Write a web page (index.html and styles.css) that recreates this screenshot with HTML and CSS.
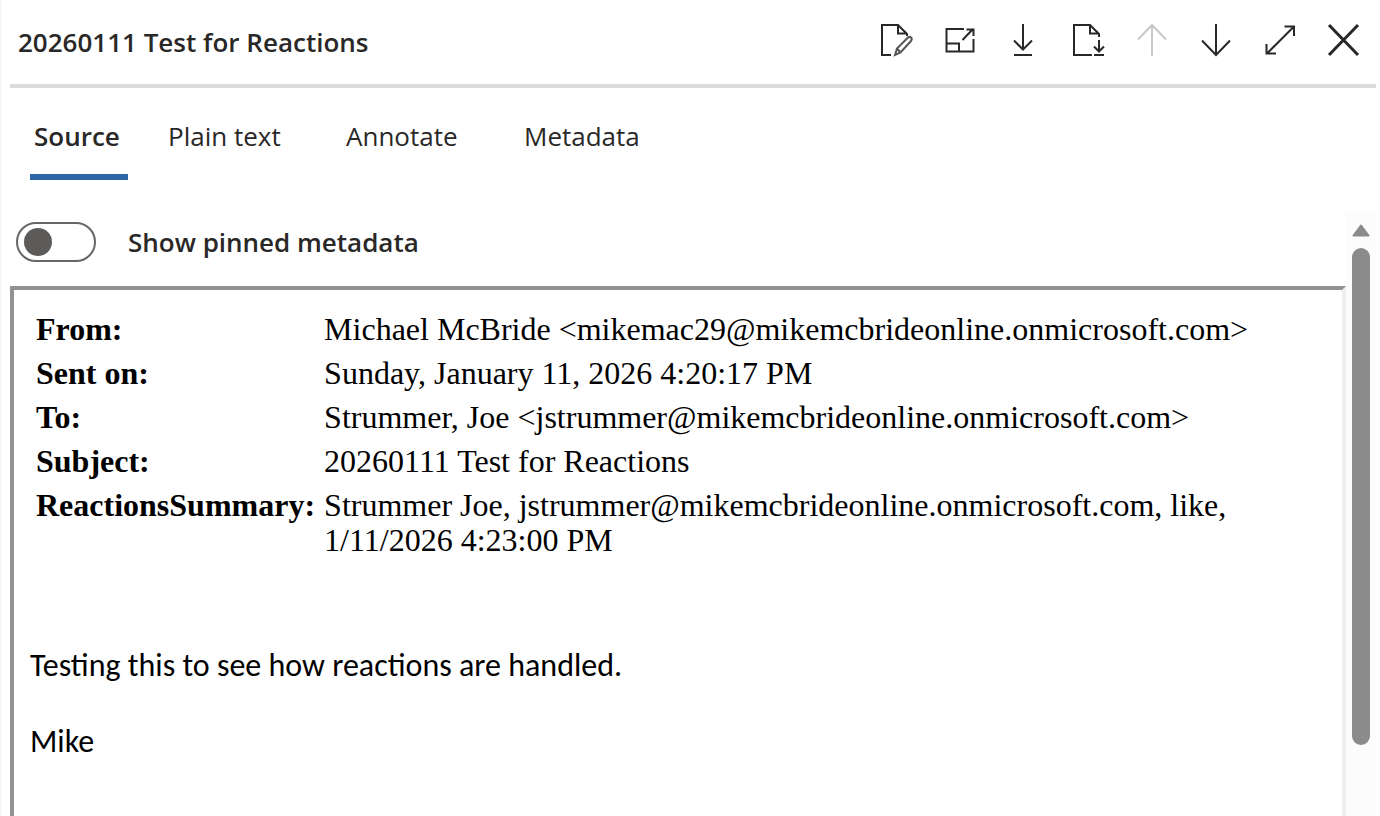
FILE: index.html
```
<!DOCTYPE html>
<html lang="en">
<head>
    <meta charset="UTF-8">
    <meta name="viewport" content="width=device-width, initial-scale=1.0">
    <title>20260111 Test for Reactions</title>
    <link rel="stylesheet" href="styles.css">
</head>
<body>

    <div class="panel">
        <header class="panel-header">
            <h1>20260111 Test for Reactions</h1>
            <div class="toolbar">
                <button type="button" aria-label="Edit document">
                    <svg viewBox="0 0 36 36"><path d="M13 33H4V3H20L29 12V14M20 3V11.500H29"/><path class="thin" d="M17 33l2-6.500L29.500 16q2-2 3.500-.5t0 3.500L22.500 30.500zM19 26.500l3.500 4"/></svg>
                </button>
                <button type="button" aria-label="Open in new window">
                    <svg viewBox="0 0 36 36"><path d="M22 7H4.500V29.500H31.500V17M4.500 21.500H17V29.500M20.500 18L31 7M24.500 7.500H31.500V14"/></svg>
                </button>
                <button type="button" aria-label="Download">
                    <svg viewBox="0 0 36 36"><path d="M17 2V27M8 18.500l9 9 9-9M8 33H26"/></svg>
                </button>
                <button type="button" aria-label="Download as file">
                    <svg viewBox="0 0 36 36"><path d="M22 33H4V3H20L29 12V15M20 3V11.500H29M29 18V29.500M24 24.500l5 5 5-5M24 33H34"/></svg>
                </button>
                <button type="button" aria-label="Previous item" disabled>
                    <svg viewBox="0 0 36 36"><path d="M18 34V3M4 17.500L18 3l14 14.500"/></svg>
                </button>
                <button type="button" aria-label="Next item">
                    <svg viewBox="0 0 36 36"><path d="M18 2V33M4 18.500l14 14.500 14-14.500"/></svg>
                </button>
                <button type="button" aria-label="Expand">
                    <svg viewBox="0 0 36 36"><path d="M5 31.500L31 5.500M22.500 4.500H32V14M4.500 22V31.500H14"/></svg>
                </button>
                <button type="button" aria-label="Close">
                    <svg class="close" viewBox="0 0 36 36"><path d="M3 3l29 30M32 3L3 33"/></svg>
                </button>
            </div>
        </header>

        <nav class="tabs" role="tablist">
            <button type="button" role="tab" class="tab active" aria-selected="true">Source</button>
            <button type="button" role="tab" class="tab">Plain text</button>
            <button type="button" role="tab" class="tab">Annotate</button>
            <button type="button" role="tab" class="tab">Metadata</button>
        </nav>

        <div class="viewer">
            <div class="content">
                <div class="pinned">
                    <input type="checkbox" role="switch" id="showPinned">
                    <label for="showPinned">Show pinned metadata</label>
                </div>

                <article class="message">
                    <table class="mail-headers">
                        <tr><th scope="row">From:</th><td>Michael McBride &lt;mikemac29@mikemcbrideonline.onmicrosoft.com&gt;</td></tr>
                        <tr><th scope="row">Sent on:</th><td>Sunday, January 11, 2026 4:20:17 PM</td></tr>
                        <tr><th scope="row">To:</th><td>Strummer, Joe &lt;jstrummer@mikemcbrideonline.onmicrosoft.com&gt;</td></tr>
                        <tr><th scope="row">Subject:</th><td>20260111 Test for Reactions</td></tr>
                        <tr><th scope="row">ReactionsSummary:</th><td>Strummer Joe, jstrummer@mikemcbrideonline.onmicrosoft.com, like, 1/11/2026 4:23:00 PM</td></tr>
                    </table>
                    <div class="mail-body">
                        <p>Testing this to see how reactions are handled.</p>
                        <p>Mike</p>
                    </div>
                </article>
            </div>

            <div class="scrollbar" aria-hidden="true">
                <svg class="scroll-up" viewBox="0 0 18 13"><path d="M9 1.500L16.500 11.500H1.500z"/></svg>
                <div class="scroll-thumb"></div>
            </div>
        </div>
    </div>

</body>
</html>
```

FILE: styles.css
```
* { margin: 0; padding: 0; box-sizing: border-box; }
body { background: #fff; color: #292827; font-family: "Open Sans", "Noto Sans", sans-serif; }
button { background: none; border: none; color: inherit; font: inherit; cursor: pointer; }

.panel { display: flex; flex-direction: column; height: 100vh; padding: 0 4px 0 8px; border-left: 2px solid #f7f7f7; overflow: hidden; }

.panel-header { display: flex; justify-content: space-between; align-items: center; height: 88px; padding: 0 14px 4px 8px; border-bottom: 4px solid #dcdcdc; flex-shrink: 0; }
.panel-header h1 { padding-top: 4px; font-size: 26px; font-weight: 600; line-height: 36px; white-space: nowrap; }
.toolbar { display: flex; gap: 28px; }
.toolbar button { width: 36px; height: 36px; }
.toolbar svg { display: block; width: 36px; height: 36px; fill: none; stroke: #292827; stroke-width: 2; }
.toolbar svg .thin { stroke: #555; }
.toolbar svg.close { stroke-width: 3; }
.toolbar button:disabled { cursor: default; }
.toolbar button:disabled svg { stroke: #c9c8c7; }

.tabs { display: grid; grid-template-columns: 138px 178px 178px auto; justify-content: start; height: 92px; padding-left: 20px; flex-shrink: 0; }
.tab { justify-self: start; padding-top: 4px; font-size: 26px; white-space: nowrap; }
.tab.active { width: 98px; padding: 10px 4px 0; border-bottom: 6px solid #2a66a8; font-weight: 600; text-align: left; }

.viewer { display: flex; flex: 1; min-height: 0; padding-top: 32px; }
.content { display: flex; flex-direction: column; flex: 1; min-width: 0; }

.pinned { display: flex; align-items: center; gap: 32px; height: 60px; padding-left: 6px; flex-shrink: 0; }
.pinned input { appearance: none; display: flex; align-items: center; width: 80px; height: 40px; padding-left: 6px; border: 2px solid #666; border-radius: 20px; cursor: pointer; }
.pinned input::before { content: ""; width: 28px; height: 28px; border-radius: 50%; background: #5c5b5a; }
.pinned input:checked::before { margin-left: 36px; }
.pinned label { font-size: 26px; font-weight: 600; }

.message { flex: 1; min-height: 0; margin-top: 14px; padding: 16px; border: 4px solid #929292; border-right-color: #eee; border-bottom: none; color: #000; overflow: hidden; }
.mail-headers { border-spacing: 3px; font-family: "Liberation Serif", serif; font-size: 32px; line-height: 35px; }
.mail-headers th, .mail-headers td { padding: 3px; text-align: left; vertical-align: top; }
.mail-body { margin-top: 83px; font-family: Carlito, Calibri, Lato, sans-serif; font-size: 32px; line-height: 38px; }
.mail-body p + p { margin-top: 38px; }

.scrollbar { display: flex; flex-direction: column; align-items: center; width: 30px; padding-top: 12px; background: #fcfcfc; }
.scroll-up { width: 18px; height: 13px; fill: #8b8b8b; stroke: #8b8b8b; stroke-width: 2; stroke-linejoin: round; }
.scroll-thumb { width: 18px; height: 84%; margin-top: 11px; border-radius: 9px; background: #8b8b8b; }
```
